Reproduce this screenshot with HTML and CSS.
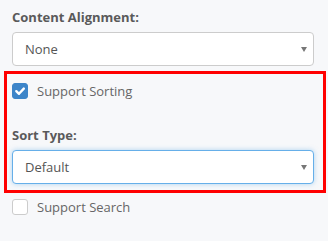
FILE: index.html
```html
<!DOCTYPE html>
<html>
<head>
<meta charset="utf-8">
<link rel="stylesheet" href="styles.css">
</head>
<body>
<div class="panel">
  <div class="label">Content Alignment:</div>
  <div class="select"><span>None</span><i class="caret"></i></div>
  <div class="highlight">
    <div class="check-row">
      <span class="box checked"><svg viewBox="0 0 16 16" width="16" height="16"><path d="M4.3 8.2 L7 10.8 L11.8 5.6" fill="none" stroke="#fff" stroke-width="2.4" stroke-linecap="round" stroke-linejoin="round"/></svg></span>
      <span class="check-text">Support Sorting</span>
    </div>
    <div class="label sort-label">Sort Type:</div>
    <div class="select focus"><span>Default</span><i class="caret"></i></div>
  </div>
  <div class="check-row search-row">
    <span class="box"></span>
    <span class="check-text">Support Search</span>
  </div>
</div>
</body>
</html>
```
FILE: styles.css
```css
html, body {
  margin: 0;
  padding: 0;
  background: #f7f8fa;
  font-family: "Open Sans", "Liberation Sans", sans-serif;
}
.panel {
  width: 302px;
  padding: 8px 0 0 12px;
}
.label {
  font-size: 13px;
  font-weight: 700;
  line-height: 18px;
  color: #5a5a5a;
}
.select {
  margin-top: 6px;
  height: 34px;
  box-sizing: border-box;
  border: 1px solid #ccc;
  border-radius: 4px;
  background: #fff;
  display: flex;
  align-items: center;
  padding: 0 12px;
  font-size: 13px;
  color: #555;
  position: relative;
}
.select span { flex: 1; }
.caret {
  width: 0;
  height: 0;
  border-left: 3px solid transparent;
  border-right: 3px solid transparent;
  border-top: 5px solid #777;
  margin-right: -6px;
}
.select.focus {
  border-color: #66afe9;
  box-shadow: 0 0 5px rgba(102, 175, 233, 0.5);
}
.highlight {
  margin: 5px -12px 0 -8px;
  border: 3px solid #ff0000;
  padding: 9px 9px 6px 5px;
}
.check-row {
  display: flex;
  align-items: center;
  height: 16px;
}
.box {
  width: 16px;
  height: 16px;
  box-sizing: border-box;
  border: 1px solid #ccc;
  border-radius: 3px;
  background: #fff;
  display: block;
}
.box.checked {
  background: #3d85c9;
  border-color: #3d85c9;
}
.box svg { display: block; margin: -1px; }
.check-text {
  margin-left: 9px;
  font-size: 13px;
  color: #666;
  line-height: 16px;
}
.sort-label { margin-top: 27px; }
.search-row { margin-top: 6px; }
```
